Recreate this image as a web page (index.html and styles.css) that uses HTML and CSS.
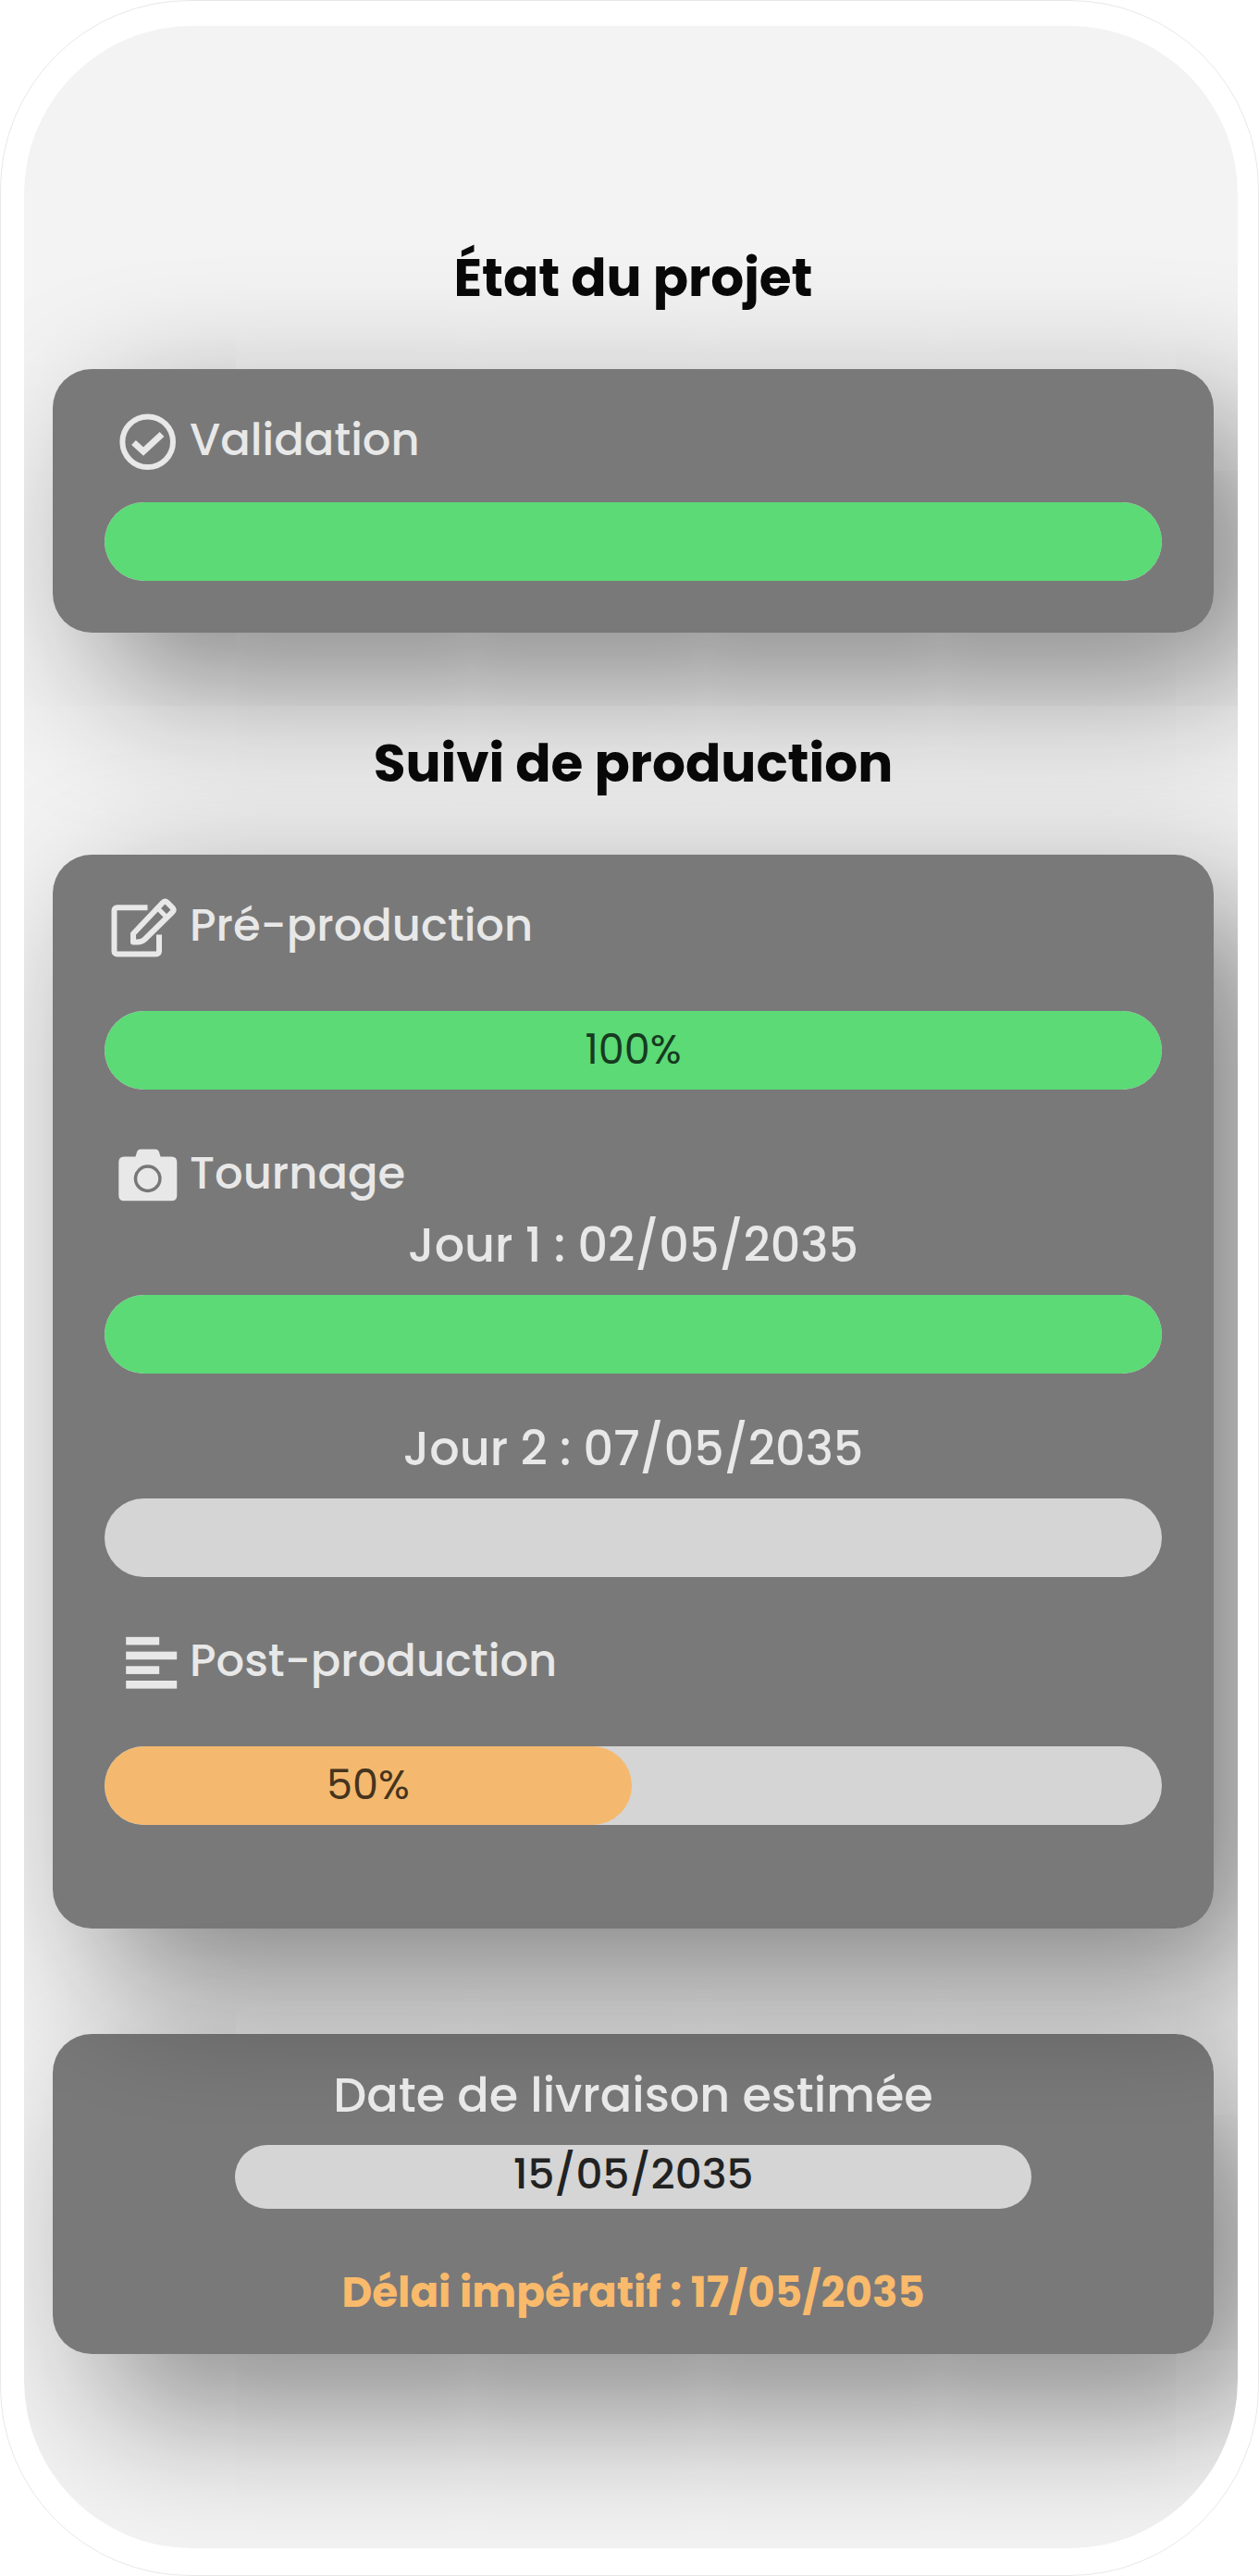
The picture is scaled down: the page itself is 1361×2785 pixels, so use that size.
FILE: index.html
```html
<!DOCTYPE html>
<html lang="fr">
<head>
    <meta charset="UTF-8">
    <title>Suivi de production</title>
    <meta name="viewport" content="width=device-width, initial-scale=1">
    <link rel="stylesheet" href="styles.css">
</head>
<body>
    <div class="phone">
        <main class="screen">
            <h2 class="title">État du projet</h2>
            <section class="card">
                <div class="step">
                    <svg class="step-icon" viewBox="0 0 94 80" fill="none" stroke="currentColor" stroke-width="6">
                        <circle cx="46.7" cy="42.7" r="27.3"/>
                        <path d="M31.5 43.5L42 53L62 34.5" stroke-width="7"/>
                    </svg>
                    <span class="step-name">Validation</span>
                </div>
                <div class="bar bar-first"><div class="fill done" style="width:100%"></div></div>
            </section>

            <h2 class="title title-prod">Suivi de production</h2>
            <section class="card card-prod">
                <div class="step">
                    <svg class="step-icon" viewBox="0 0 94 80" fill="none" stroke="currentColor" stroke-width="6" stroke-linejoin="round">
                        <path d="M46.5 21.3H13.5a3 3 0 0 0-3 3V68.5a3 3 0 0 0 3 3H56a3 3 0 0 0 3-3V50.5"/>
                        <path d="M31 58.5V49.5L63 15.8Q65.5 13.4 68 15.8L73.5 21.3Q75.8 23.6 73.5 26L43.5 55.5Q40 58.5 36 58.5Z"/>
                        <path d="M57.5 22L67.5 32" stroke-width="5"/>
                    </svg>
                    <span class="step-name">Pré-production</span>
                </div>
                <div class="bar bar-step"><div class="fill done" style="width:100%">100%</div></div>

                <div class="step step-next">
                    <svg class="step-icon" viewBox="0 0 94 80" fill="currentColor">
                        <path d="M21 22.5H33.5L35 17.5Q36 14.5 39 14.5H55Q58 14.5 59 17.5L60.5 22.5H72.5Q78.3 22.5 78.3 28.5V64.5Q78.3 70.3 72.5 70.3H21Q15.3 70.3 15.3 64.5V28.5Q15.3 22.5 21 22.5Z"/>
                        <circle cx="46.7" cy="46.2" r="13.2" fill="none" stroke="#777" stroke-width="3.5"/>
                    </svg>
                    <span class="step-name">Tournage</span>
                </div>
                <div class="day">Jour 1 : 02/05/2035</div>
                <div class="bar bar-day"><div class="fill done" style="width:100%"></div></div>
                <div class="day day-next">Jour 2 : 07/05/2035</div>
                <div class="bar bar-day"></div>

                <div class="step step-next">
                    <svg class="step-icon" viewBox="0 0 94 80" fill="currentColor">
                        <rect x="23.2" y="14.8" width="36" height="8.6"/>
                        <rect x="23.2" y="30.6" width="55" height="8.6"/>
                        <rect x="23.2" y="46.3" width="36" height="8.6"/>
                        <rect x="23.2" y="62" width="55" height="8.6"/>
                    </svg>
                    <span class="step-name">Post-production</span>
                </div>
                <div class="bar bar-step"><div class="fill progress" style="width:49.85%">50%</div></div>
            </section>

            <section class="card card-delivery">
                <div class="delivery-label">Date de livraison estimée</div>
                <div class="delivery-date">15/05/2035</div>
                <div class="deadline">Délai impératif : 17/05/2035</div>
            </section>
        </main>
    </div>
</body>
</html>
```
FILE: styles.css
```css
* {
    box-sizing: border-box;
}
body {
    margin: 0;
    background: #fff;
    font-family: Poppins, Inter, sans-serif;
    white-space: nowrap;
}
.phone {
    height: 2785px;
    padding: 27px 22px 29px 25px;
    border: 1px solid #e8e8e8;
    border-radius: 205px;
    background: #fff;
}
.screen {
    height: 2727px;
    padding: 233px 26px 0 31px;
    border-radius: 182px;
    background: #f2f3f2;
    overflow: hidden;
}
.title {
    margin: 0;
    height: 80px;
    line-height: 80px;
    text-align: center;
    font-size: 56.5px;
    font-weight: 700;
    color: #080808;
}
.title-prod {
    margin-top: 102px;
}
.card {
    margin-top: 58px;
    padding: 35.5px 56px 56px;
    border-radius: 42px;
    background: rgba(0,0,0,0.5);
    box-shadow: 54px 54px 160px rgba(0,0,0,0.48);
    color: #e8e8e8;
}
.card-prod {
    padding-top: 36px;
    padding-bottom: 112px;
}
.step {
    display: flex;
    align-items: center;
    height: 80px;
    font-size: 48px;
    font-weight: 500;
}
.step-name {
    margin-left: -2px;
    padding-top: 2px;
}
.step-next {
    margin-top: 50px;
}
.step-icon {
    width: 94px;
    height: 80px;
    flex: none;
}
.bar {
    height: 85px;
    border-radius: 43px;
    background: #d5d5d5;
    overflow: hidden;
}
.bar-first {
    margin-top: 28px;
}
.bar-step {
    margin-top: 53px;
}
.bar-day {
    margin-top: 16px;
}
.fill {
    display: flex;
    align-items: center;
    justify-content: center;
    height: 100%;
    padding-bottom: 2px;
    border-radius: 43px;
    font-size: 44.5px;
    font-weight: 400;
}
.done {
    background: #5bda76;
    color: #173a20;
}
.progress {
    background: #f4b96e;
    color: #45341e;
}
.day {
    height: 76px;
    line-height: 77px;
    text-align: center;
    font-size: 50.8px;
    font-weight: 500;
}
.day-next {
    margin-top: 43px;
}
.card-delivery {
    margin-top: 114px;
    padding: 29.5px 56px 29px;
    text-align: center;
}
.delivery-label {
    height: 76px;
    line-height: 76px;
    font-size: 50.8px;
    font-weight: 500;
}
.delivery-date {
    width: 861px;
    height: 68.5px;
    margin: 15px auto 0;
    border-radius: 35px;
    background: #d5d5d5;
    color: #222;
    line-height: 64px;
    font-size: 45.2px;
    font-weight: 500;
}
.deadline {
    height: 76px;
    margin-top: 52px;
    line-height: 78px;
    font-size: 45.2px;
    font-weight: 700;
    color: #f9ba6b;
}
```
